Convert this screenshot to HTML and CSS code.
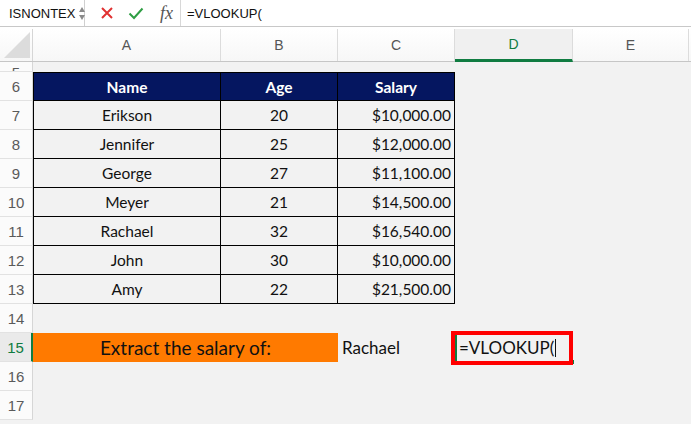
FILE: index.html
```html
<!DOCTYPE html>
<html lang="en">
<head>
  <meta charset="UTF-8">
  <title>VLOOKUP</title>
  <link rel="stylesheet" href="styles.css">
</head>
<body>
  <div class="fbar">
    <div class="namebox">
      <span>ISNONTEX</span>
      <span class="spin"><i class="up"></i><i class="down"></i></span>
    </div>
    <div class="fbtns">
      <svg width="14" height="14" viewBox="0 0 14 14"><path d="M2 2 L12 12 M12 2 L2 12" stroke="#e03131" stroke-width="2" fill="none"/></svg>
      <svg width="16" height="14" viewBox="0 0 16 14"><path d="M1.5 7.5 L6 12 L14.5 2.5" stroke="#2f9e44" stroke-width="2" fill="none"/></svg>
      <span class="fx">fx</span>
    </div>
    <div class="formula">=VLOOKUP(</div>
  </div>

  <div class="sheet">
    <div class="row head">
      <div class="corner"><i></i></div>
      <div class="ch">A</div>
      <div class="ch">B</div>
      <div class="ch">C</div>
      <div class="ch sel">D</div>
      <div class="ch">E</div>
    </div>

    <div class="row part">
      <div class="rh"><span>5</span></div>
    </div>

    <div class="row">
      <div class="rh">6</div>
      <div class="c th">Name</div>
      <div class="c th">Age</div>
      <div class="c th">Salary</div>
    </div>
    <div class="row">
      <div class="rh">7</div>
      <div class="c td">Erikson</div>
      <div class="c td">20</div>
      <div class="c td num">$10,000.00</div>
    </div>
    <div class="row">
      <div class="rh">8</div>
      <div class="c td">Jennifer</div>
      <div class="c td">25</div>
      <div class="c td num">$12,000.00</div>
    </div>
    <div class="row">
      <div class="rh">9</div>
      <div class="c td">George</div>
      <div class="c td">27</div>
      <div class="c td num">$11,100.00</div>
    </div>
    <div class="row">
      <div class="rh">10</div>
      <div class="c td">Meyer</div>
      <div class="c td">21</div>
      <div class="c td num">$14,500.00</div>
    </div>
    <div class="row">
      <div class="rh">11</div>
      <div class="c td">Rachael</div>
      <div class="c td">32</div>
      <div class="c td num">$16,540.00</div>
    </div>
    <div class="row">
      <div class="rh">12</div>
      <div class="c td">John</div>
      <div class="c td">30</div>
      <div class="c td num">$10,000.00</div>
    </div>
    <div class="row">
      <div class="rh">13</div>
      <div class="c td">Amy</div>
      <div class="c td">22</div>
      <div class="c td num">$21,500.00</div>
    </div>
    <div class="row">
      <div class="rh">14</div>
    </div>
    <div class="row">
      <div class="rh active">15</div>
      <div class="c label">Extract the salary of:</div>
      <div class="c plain">Rachael</div>
      <div class="c cur">
        <span>=VLOOKUP(</span><i class="caret"></i>
        <i class="handle"></i>
        <i class="mark"></i>
      </div>
    </div>
    <div class="row">
      <div class="rh">16</div>
    </div>
    <div class="row">
      <div class="rh">17</div>
    </div>
  </div>
</body>
</html>
```

FILE: styles.css
```css
body {
  margin: 0;
  width: 691px;
  height: 424px;
  overflow: hidden;
  background: #f2f2f2;
  font-family: Lato, "Open Sans", sans-serif;
}

/* formula bar */
.fbar {
  height: 26px;
  background: #fff;
  display: flex;
  align-items: center;
  border-bottom: 1px solid #c8c8c8;
  box-shadow: 0 2px 0 #fff, 0 3px 0 #d4d4d4;
  font-family: "Liberation Sans", Arial, sans-serif;
  font-size: 13px;
  color: #111;
}
.namebox {
  width: 85px;
  height: 26px;
  box-sizing: border-box;
  border-right: 1px solid #d0d0d0;
  display: flex;
  align-items: center;
  padding-left: 9px;
}
.spin {
  display: flex;
  flex-direction: column;
  gap: 3px;
  margin-left: 4px;
}
.spin i {
  display: block;
  width: 0;
  height: 0;
  border-left: 3.5px solid transparent;
  border-right: 3.5px solid transparent;
}
.spin .up { border-bottom: 5px solid #8a8a8a; }
.spin .down { border-top: 5px solid #8a8a8a; }
.fbtns {
  width: 96px;
  height: 26px;
  box-sizing: border-box;
  border-right: 1px solid #d8d8d8;
  display: flex;
  align-items: center;
  gap: 14px;
  padding-left: 15px;
}
.fx {
  font-family: "Liberation Serif", serif;
  font-style: italic;
  font-size: 18px;
  color: #555;
  margin-left: 2px;
}
.formula {
  padding-left: 6px;
  font-size: 13px;
}

/* grid */
.sheet {
  margin-top: 2px;
}
.row {
  display: grid;
  grid-template-columns: 33px 188px 117px 117px 118px 116px;
  height: 29px;
}
.row.head {
  height: 33px;
  background: linear-gradient(#fff, #f7f7f7);
  border-bottom: 1px solid #c6c6c6;
  box-sizing: border-box;
}
.row.part {
  height: 10px;
  overflow: hidden;
}
.corner {
  border-right: 1px solid #d6d6d6;
  position: relative;
}
.corner i {
  position: absolute;
  right: 2px;
  bottom: 3px;
  width: 0;
  height: 0;
  border-left: 26px solid transparent;
  border-bottom: 26px solid #dcdcdc;
}
.ch {
  display: flex;
  align-items: center;
  justify-content: center;
  border-right: 1px solid #dcdcdc;
  font-family: "Liberation Sans", Arial, sans-serif;
  font-size: 14px;
  color: #555;
}
.ch.sel {
  background: #f0f0f0;
  color: #107c41;
  border-bottom: 3px solid #107c41;
  margin-bottom: -1px;
}
.rh {
  background: #fbfbfb;
  border-right: 1px solid #d6d6d6;
  border-bottom: 1px solid #e2e2e2;
  box-sizing: border-box;
  display: flex;
  align-items: center;
  justify-content: center;
  font-family: "Liberation Sans", Arial, sans-serif;
  font-size: 15px;
  color: #5a5a5a;
  overflow: hidden;
}
.part .rh {
  align-items: flex-end;
}
.part .rh span {
  line-height: 15px;
  margin-bottom: -9px;
}
.rh.active {
  background: #eaeaea;
  color: #107c41;
  border-right: 2px solid #107c41;
}

/* cells */
.c {
  display: flex;
  align-items: center;
  font-size: 15.5px;
  color: #111;
  box-sizing: border-box;
}
.th, .td {
  justify-content: center;
  border-right: 1px solid #000;
  border-bottom: 1px solid #000;
}
.row .c.th:nth-child(2),
.row .c.td:nth-child(2) {
  border-left: 1px solid #000;
}
.th {
  background: #051660;
  color: #fff;
  font-weight: bold;
  border-top: 1px solid #000;
}
.td.num {
  justify-content: flex-end;
  padding-right: 3px;
}
.label {
  grid-column: span 2;
  justify-content: center;
  background: #ff7a00;
  font-size: 19px;
  color: #111;
}
.plain {
  padding-left: 4px;
  font-size: 17px;
}
.cur {
  position: relative;
  border-left: 2px solid #107c41;
  border-right: 2px solid #107c41;
  padding-left: 2px;
  font-size: 17px;
}
.caret {
  display: inline-block;
  width: 1px;
  height: 18px;
  background: #111;
  margin-left: 1px;
}
.handle {
  position: absolute;
  right: -3px;
  bottom: -2px;
  width: 4px;
  height: 4px;
  background: #107c41;
}
.mark {
  position: absolute;
  left: -6px;
  top: -2px;
  width: 122px;
  height: 34px;
  box-sizing: border-box;
  border: 4px solid #ff0000;
}
```
